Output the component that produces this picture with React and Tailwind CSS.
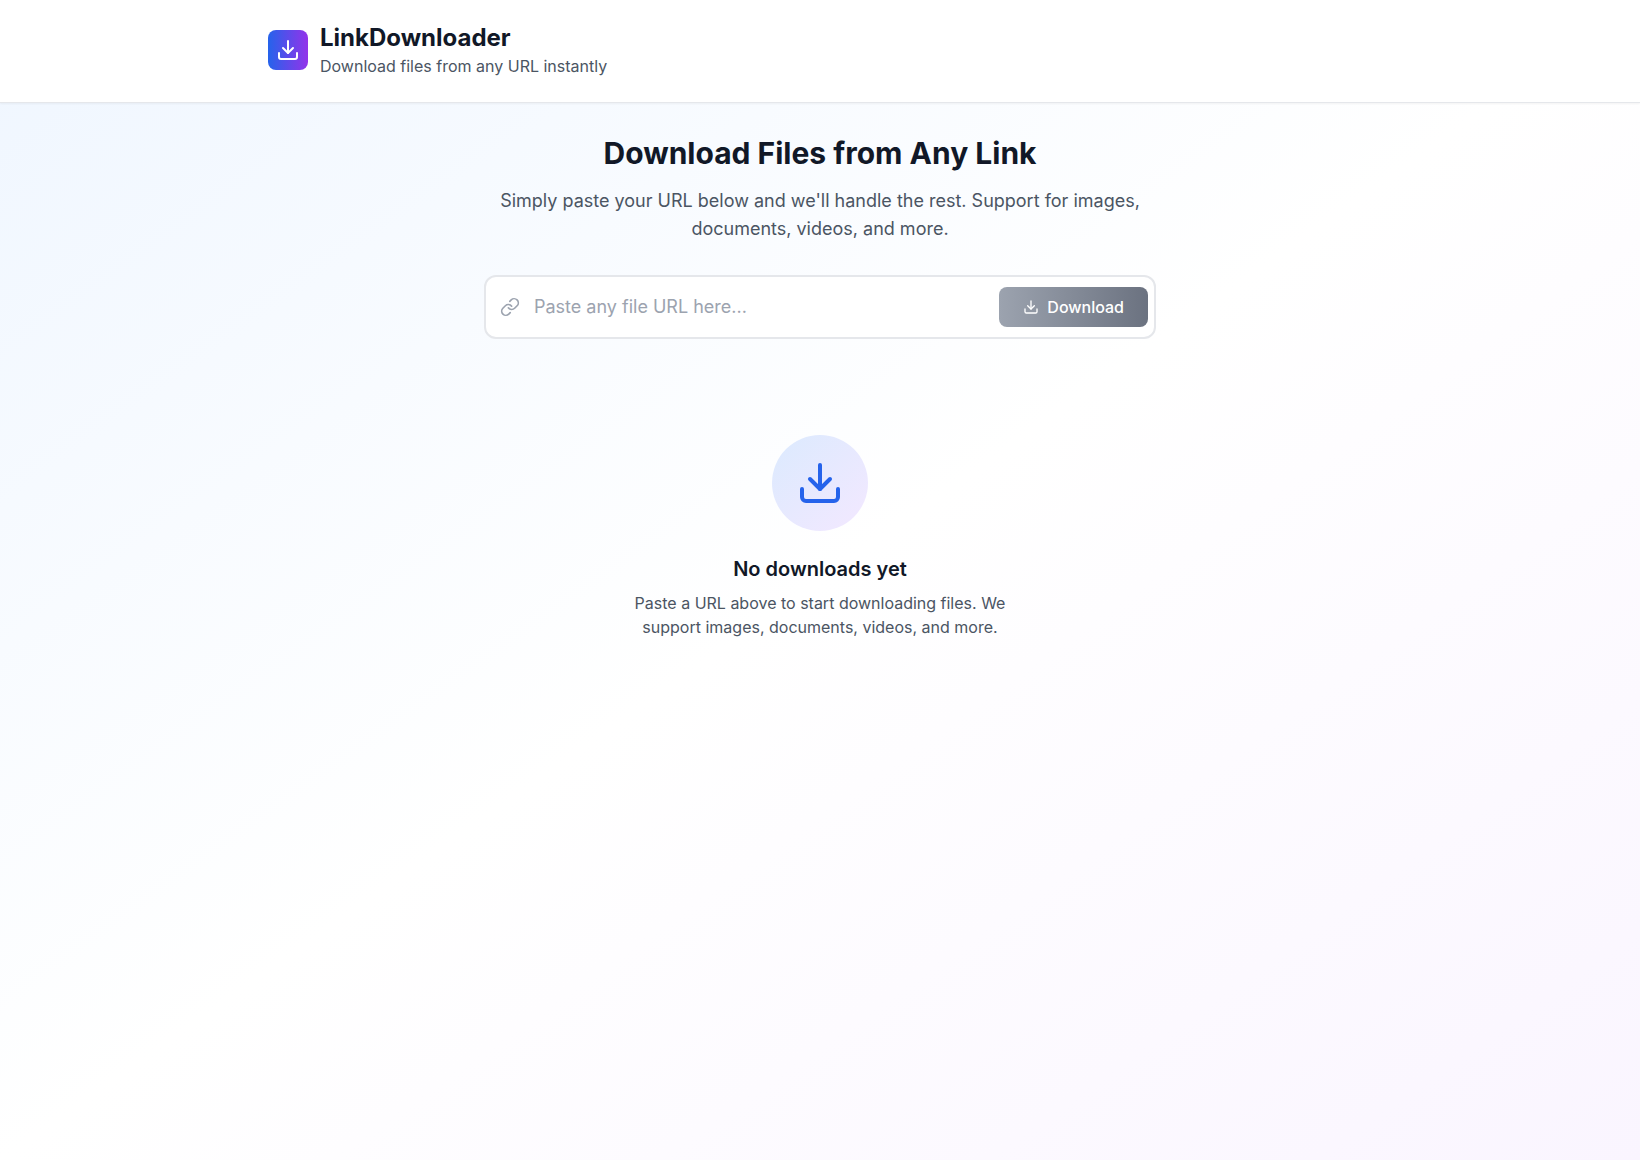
import { useState } from "react";
import { Download, Link } from "lucide-react";

function Header() {
  return (
    <header className="border-b border-[#e5e7eb] bg-white shadow-xs">
      <div className="mx-auto max-w-6xl px-6 pt-[22px] pb-6">
        <div className="flex items-center gap-3">
          <div className="rounded-lg bg-linear-to-r/srgb from-[#2563eb] to-[#9333ea] p-2">
            <Download className="size-6 text-white" aria-hidden="true" />
          </div>
          <div>
            <h1 className="text-2xl font-bold text-[#111827]">LinkDownloader</h1>
            <p className="text-base text-[#4b5563]">Download files from any URL instantly</p>
          </div>
        </div>
      </div>
    </header>
  );
}

function UrlForm() {
  const [url, setUrl] = useState("");
  return (
    <form
      className="mx-auto flex max-w-2xl items-center rounded-xl border-2 border-[#e5e7eb] bg-white px-1.5 py-2"
      onSubmit={(event) => event.preventDefault()}
    >
      <label htmlFor="url" className="px-2 text-[#9ca3af]">
        <Link className="size-5" aria-hidden="true" />
      </label>
      <input
        id="url"
        type="url"
        aria-label="File URL"
        value={url}
        onChange={(event) => setUrl(event.target.value)}
        placeholder="Paste any file URL here..."
        className="min-w-0 flex-1 px-1.5 py-2 text-lg text-[#111827] outline-none placeholder:text-[#9ca3af]"
      />
      <button
        type="submit"
        disabled={!url}
        className="flex items-center gap-2 rounded-lg bg-linear-to-r/srgb from-[#2563eb] to-[#9333ea] px-6 py-2 text-base font-medium text-white disabled:from-[#9ca3af] disabled:to-[#6b7280]"
      >
        <Download className="size-4" aria-hidden="true" />
        Download
      </button>
    </form>
  );
}

function EmptyState() {
  return (
    <section className="py-24 text-center">
      <div className="mx-auto mb-6 flex size-24 items-center justify-center rounded-full bg-linear-to-br/srgb from-[#dbeafe] to-[#f3e8ff]">
        <Download className="size-12 text-[#2563eb]" aria-hidden="true" />
      </div>
      <h3 className="mb-2 text-xl font-semibold text-[#111827]">No downloads yet</h3>
      <p className="mx-auto max-w-sm text-base text-[#4b5563]">
        Paste a URL above to start downloading files. We support images, documents, videos, and more.
      </p>
    </section>
  );
}

export default function App() {
  return (
    <div className="min-h-screen bg-linear-to-br/srgb from-[#eff6ff] via-white to-[#faf5ff] font-['Inter',sans-serif]">
      <Header />
      <main className="mx-auto max-w-6xl px-6 py-8">
        <div className="mb-8 text-center">
          <h2 className="mb-4 text-3xl font-bold text-[#111827]">Download Files from Any Link</h2>
          <p className="mx-auto max-w-2xl text-lg text-[#4b5563]">
            Simply paste your URL below and we'll handle the rest. Support for images, documents, videos, and more.
          </p>
        </div>
        <UrlForm />
        <EmptyState />
      </main>
    </div>
  );
}
